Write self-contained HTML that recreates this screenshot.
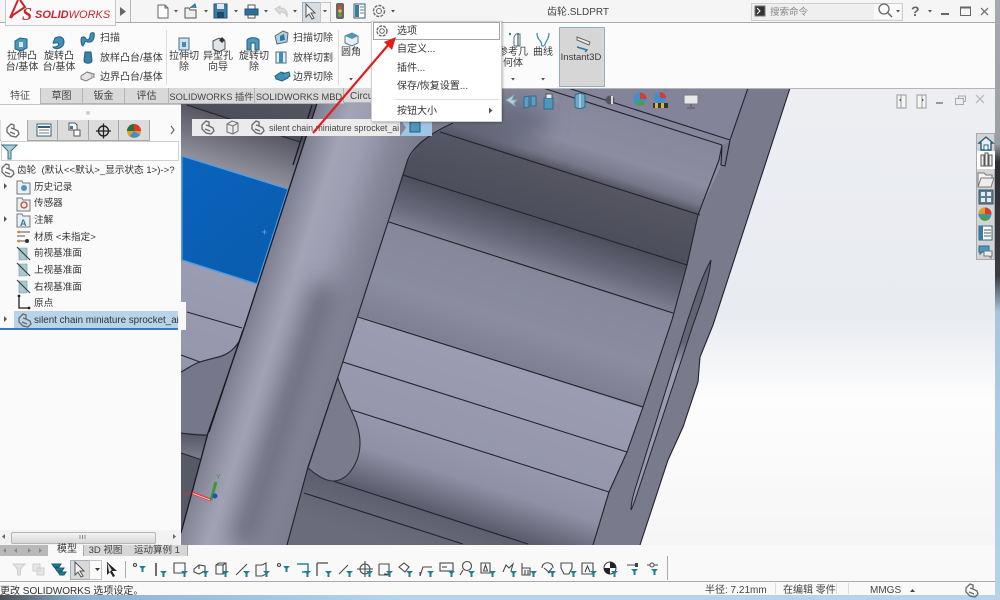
<!DOCTYPE html>
<html lang="zh"><head><meta charset="utf-8"><title>SOLIDWORKS</title>
<style>
html,body{margin:0;padding:0;background:#fff}
#r{position:relative;width:1000px;height:600px;overflow:hidden;font-family:"Liberation Sans","Noto Sans CJK SC",sans-serif;font-size:10px;color:#3a3a3a;filter:blur(.35px)}
#r div,#r>svg{position:absolute}
#r>svg{left:0;top:0}
.t{white-space:nowrap;line-height:1}
.c{transform:translateX(-50%);text-align:center;line-height:11px}
.tab{top:88px;height:15px;background:#d9d9d9;border:1px solid #b4b4b4;border-top:0;box-sizing:content-box;text-align:center;line-height:18px;font-size:9.3px;color:#444;overflow:hidden;white-space:nowrap}
.ls{font-size:9.6px;color:#333}
</style></head><body><div id="r">

<svg width="1000" height="600" viewBox="0 0 1000 600">
<defs>
<linearGradient id="bg" x1="0" y1="88" x2="0" y2="545" gradientUnits="userSpaceOnUse"><stop offset="0" stop-color="#eceef2"/><stop offset=".5" stop-color="#e8ebf0"/><stop offset=".68" stop-color="#fdfdfd"/><stop offset="1" stop-color="#f6f6f7"/></linearGradient>
<linearGradient id="teeth" gradientUnits="userSpaceOnUse" x1="0" y1="-100" x2="-151" y2="372">
<stop offset=".012" stop-color="#83849a"/><stop offset=".027" stop-color="#86879b"/><stop offset=".115" stop-color="#8c8da1"/><stop offset=".154" stop-color="#77788a"/><stop offset=".175" stop-color="#555662"/><stop offset=".279" stop-color="#4d4e5b"/><stop offset=".337" stop-color="#666778"/><stop offset=".379" stop-color="#7f8092"/><stop offset=".385" stop-color="#86879b"/><stop offset=".5" stop-color="#8b8ca0"/><stop offset=".577" stop-color="#7e7f92"/><stop offset=".583" stop-color="#9b9cb1"/><stop offset=".677" stop-color="#9899ae"/><stop offset=".763" stop-color="#9697ac"/><stop offset=".829" stop-color="#8f90a5"/><stop offset=".908" stop-color="#5c5d6d"/><stop offset=".954" stop-color="#666776"/><stop offset="1" stop-color="#6b6c7b"/></linearGradient>
<linearGradient id="band" gradientUnits="userSpaceOnUse" x1="351" y1="0" x2="454" y2="33.7"><stop offset="0" stop-color="#7d7e90"/><stop offset=".3" stop-color="#a3a4b6"/><stop offset=".52" stop-color="#9c9db0"/><stop offset=".78" stop-color="#868799"/><stop offset="1" stop-color="#7b7c8e"/></linearGradient>
<linearGradient id="slot" x1="0" y1="260" x2="0" y2="510" gradientUnits="userSpaceOnUse"><stop offset="0" stop-color="#5f6070"/><stop offset=".33" stop-color="#646575"/><stop offset=".42" stop-color="#9a9bb0"/><stop offset="1" stop-color="#9a9bb0"/></linearGradient>
<linearGradient id="dk" x1="0" y1="433" x2="0" y2="458" gradientUnits="userSpaceOnUse"><stop offset="0" stop-color="#565765"/><stop offset="1" stop-color="#7b7c8c"/></linearGradient>
<linearGradient id="tl" gradientUnits="userSpaceOnUse" x1="0" y1="45" x2="-15" y2="92"><stop offset="0" stop-color="#555662"/><stop offset="1" stop-color="#90919d"/></linearGradient>
<linearGradient id="blue" x1="182" y1="156" x2="280" y2="280" gradientUnits="userSpaceOnUse"><stop offset="0" stop-color="#0a63bb"/><stop offset="1" stop-color="#0a5cae"/></linearGradient>
<filter id="b1" x="-50%" y="-50%" width="200%" height="200%"><feGaussianBlur stdDeviation="11"/></filter>
<clipPath id="bc"><polygon points="322,88 500,88 453,123 420,142 407,162 388,222 357,318 337,380 308,467 287,545 181,545 181,533 208,433 245,325"/></clipPath>
</defs>
<rect x="181" y="88" width="819" height="457" fill="url(#bg)"/>
<polygon points="181,88 748,88 730,140 722,145 721,165 698,215 687,265 672,320 643,407 627,452 609,492 593,545 181,545" fill="url(#teeth)"/>
<polygon points="181,103 310,145 288,189 181,155" fill="url(#tl)"/>
<ellipse cx="470" cy="122" rx="80" ry="26" fill="#55566a" opacity=".6" filter="url(#b1)"/>
<polygon points="748,88 790,88 713,325 700,357 698,382 683,427 668,460 640,545 593,545 609,492 627,452 643,407 672,320 687,265 698,215 721,165 722,145 730,140" fill="#797a8c"/>
<path d="M790,88 713,325 700,357 698,382 683,427 668,460 640,545M748,88 730,140M593,545 609,492 627,452 643,407 672,320 687,265 698,215 719,160 722,145 721,165 725,166 730,140" fill="none" stroke="#22232c" stroke-width="1.1"/>
<path d="M711,260C700,280 693,305 687,322L637,483C633,495 631,503 631,510C634,504 636,497 640,485L693,325C702,300 709,280 711,260Z" fill="url(#slot)" stroke="#22232c" stroke-width="1"/>
<g stroke="#23242e" stroke-width="1.15" fill="none">
<path d="M543,88 722,145M568,88 730,140M440,132 700,215M403,175 687,265M389,222 673,313M358,317 643,407M343,362 627,452M352,410 609,492M333,481 528,544M304,493 463,544M187,105 300,142M187,312 242,328M181,355 200,362"/>
</g>
<polygon points="182,156 288,189 257,284 182,260" fill="url(#blue)" stroke="#4a9fe8" stroke-width="1.3"/>
<path d="M262,232h5M264.500,229.500v5" stroke="#5aa6ee" stroke-width=".8"/>
<polygon points="181,372 200,362 230,352 243,335 208,434 181,433" fill="#76778a"/>
<polygon points="181,433 208,435 202,460 181,453" fill="url(#dk)"/>
<polygon points="181,453 202,460 181,533" fill="#585966"/>
<path d="M243,335C238,345 232,352 222,356C212,359 205,360 200,362C193,364 187,369 181,372M181,433C190,434 200,436 208,435M181,453 202,460" fill="none" stroke="#23242e" stroke-width="1.1"/>
<polygon points="322,88 500,88 453,123 420,142 407,162 388,222 357,318 337,380 308,467 287,545 181,545 181,533 208,433 245,325" fill="url(#band)"/>
<g clip-path="url(#bc)"><path d="M325,285 240,545" stroke="#474857" stroke-width="24" opacity=".55" filter="url(#b1)" fill="none"/></g>
<path d="M338,378C346,405 360,420 360,443C360,462 348,481 333,481C325,481 315,474 308,468L337,380Z" fill="#7a7b8d" stroke="#2a2b35" stroke-width="1.1"/>
<path d="M453,123C435,131 412,145 407,162L388,222 357,318 337,380 308,467 287,545" fill="none" stroke="#23242e" stroke-width="1.15"/>
<path d="M312,105 293,165M322,88 290,186 245,325 208,433 181,533M243,330 209,432" fill="none" stroke="#191a22" stroke-width="1.3"/>
<path d="M192,493 211,500" stroke="#e33" stroke-width="3"/><path d="M193,493.500 210,500" stroke="#fbd" stroke-width="1"/>
<path d="M211,500 216,482" stroke="#3a9a3a" stroke-width="3"/><circle cx="215" cy="496" r="2.500" fill="#2548c8"/>
<text x="185" y="496" font-size="7" fill="#d33" font-family="Liberation Sans">x</text><text x="216" y="479" font-size="7" fill="#3a9a3a" font-family="Liberation Sans">Y</text>
</svg>

<!-- title + ribbon chrome -->
<div style="left:0;top:0;width:1000px;height:22px;background:#f5f5f5;border-bottom:1px solid #a9a9a9"></div>
<div style="left:0;top:23px;width:1000px;height:65px;background:#fbfbfb;border-bottom:1px solid #b5b5b5"></div>
<div style="left:5px;top:-1px;width:109px;height:25px;background:#fafafa;border:1px solid #c8c8c8"></div>
<div style="left:166px;top:30px;width:1px;height:55px;background:#ddd"></div>
<div style="left:338px;top:30px;width:1px;height:55px;background:#ddd"></div>
<div style="left:559px;top:27px;width:44px;height:58px;background:#d6d6d6;border:1px solid #8fb0bf"></div>
<div style="left:302px;top:2px;width:18px;height:19px;background:#d9dde0;border:1px solid #9cb2c0"></div>
<div style="left:320px;top:2px;width:9px;height:19px;background:#f6f6f6;border:1px solid #c4c4c4"></div>
<div style="left:751px;top:3px;width:150px;height:16px;background:#efefef;border:1px solid #cfcfcf"></div>
<div style="left:874px;top:4px;width:27px;height:15px;background:#fafafa"></div>

<!-- tabs -->
<div style="left:0;top:88px;width:40px;height:16px;background:#fbfbfb;text-align:center;line-height:18px;color:#555">特征</div>
<div class="tab" style="left:40px;width:41px;font-size:10px">草图</div>
<div class="tab" style="left:82px;width:41px;font-size:10px">钣金</div>
<div class="tab" style="left:124px;width:43px;font-size:10px">评估</div>
<div class="tab" style="left:168px;width:85px">SOLIDWORKS 插件</div>
<div class="tab" style="left:254px;width:88px">SOLIDWORKS MBD</div>
<div class="tab" style="left:343px;width:30px;text-align:left;padding-left:6px;box-sizing:border-box;font-size:10px">Circu</div>

<!-- feature tree panel -->
<div style="left:0;top:104px;width:181px;height:441px;background:#fafafa"></div>
<div style="left:0;top:104px;width:181px;height:1px;background:#c4c4c4"></div>
<div style="left:86px;top:111px;width:4px;height:4px;border-radius:50%;background:#cfcfcf"></div>
<div style="left:0;top:120px;width:150px;height:20px;background:#dcdcdc;border-bottom:1px solid #a6a6a6"></div>
<div style="left:1px;top:120px;width:26px;height:21px;background:#fafafa"></div>
<div style="left:57px;top:120px;width:1px;height:20px;background:#a8a8a8"></div>
<div style="left:88px;top:120px;width:1px;height:20px;background:#a8a8a8"></div>
<div style="left:118px;top:120px;width:1px;height:20px;background:#a8a8a8"></div>
<div style="left:149px;top:120px;width:1px;height:20px;background:#a8a8a8"></div>
<div style="left:27px;top:120px;width:1px;height:20px;background:#a8a8a8"></div>
<div style="left:1px;top:141px;width:176px;height:18px;background:#fff;border:1px solid #d0d0d0"></div>
<div style="left:14px;top:311px;width:165px;height:17px;background:#b8d4e8"></div>
<div style="left:0;top:328px;width:179px;height:2px;background:#3a78c0"></div>
<div style="left:178px;top:302px;width:8px;height:28px;background:#f8f8f8"></div>
<div style="left:0;top:530px;width:180px;height:15px;background:#f2f2f2"></div>
<div style="left:11px;top:532px;width:143px;height:10px;background:linear-gradient(#f4f4f4,#d6d6d6);border:1px solid #b5b5b5;border-radius:2px"></div>

<!-- bottom -->
<div style="left:0;top:545px;width:995px;height:50px;background:#f9f9f9"></div>
<div style="left:0;top:545px;width:48px;height:11px;background:#b9b9b9"></div>
<div style="left:83px;top:545px;width:43px;height:11px;background:#d6d6d6;border-right:1px solid #aaa;border-left:1px solid #aaa;text-align:center;line-height:12px;color:#444;font-size:9.5px">3D 视图</div>
<div style="left:127px;top:545px;width:60px;height:11px;background:#d6d6d6;border-right:1px solid #aaa;text-align:center;line-height:12px;color:#444;font-size:9.5px">运动算例 1</div>
<div class="t" style="left:57px;top:545px;font-size:10px;color:#333">模型</div>
<div style="left:0;top:581px;width:995px;height:1px;background:#aaa"></div>
<div style="left:70px;top:560px;width:18px;height:18px;background:#d9d9d9;border:1px solid #9cb2c0"></div>
<div style="left:89px;top:560px;width:11px;height:18px;background:#fafafa;border:1px solid #c4c4c4"></div>
<div style="left:125px;top:561px;width:1px;height:17px;background:#aaa"></div>
<div style="left:667px;top:556px;width:1px;height:24px;background:#aaa"></div>
<div style="left:775px;top:583px;width:1px;height:11px;background:#ddd"></div>
<div style="left:836px;top:583px;width:1px;height:11px;background:#ddd"></div>
<div style="left:848px;top:583px;width:1px;height:11px;background:#ddd"></div>
<div style="left:0;top:595px;width:1000px;height:5px;background:linear-gradient(90deg,#4a4f55 0,#8fb2d2 8%,#b7d3ec 40%,#b7d3ec 100%)"></div>
<div style="left:995px;top:0;width:5px;height:600px;background:linear-gradient(#a5a9b0 0,#9a9da4 24%,#2c2e33 27%,#3a3c42 46%,#a9c4dc 52%,#b7d3ec 100%)"></div>
<div style="left:976px;top:133px;width:19px;height:127px;background:#d4d4d4;border:1px solid #a9a9a9;box-sizing:border-box"></div>
<div style="left:977px;top:151px;width:18px;height:18px;background:#fff"></div>

<!-- breadcrumb -->
<div style="left:192px;top:119px;width:208px;height:17px;background:#ebebeb"></div>
<div style="left:400px;top:119px;width:32px;height:17px;background:#9ec5e4;clip-path:polygon(0 0,100% 0,100% 100%,0 100%,6px 50%)"></div>

<svg width="1000" height="600" viewBox="0 0 1000 600">
<defs>
<g id="P" fill="none" stroke="#6a6a6a" stroke-width="1.300"><path d="M1,5 5,1 8,2 8,6 12,8 13,11 10,14 5,13 1,9Z"/><path d="M5,5 8,6M4,9 9,11"/></g>
<g id="F"><path d="M0,0h7l-2.500,2.500v3.500h-2v-3.500z" fill="#1f7f98"/></g>
<g id="dd"><path d="M0,0h4l-2,2.500z" fill="#555"/></g>
<g id="pl" fill="#a9c9cf" stroke="#6e9aa4" stroke-width=".6"><path d="M3,2h8v12h-8z"/><path d="M1,1 14,14" stroke="#39424a" stroke-width="1.200"/></g>
</defs>
<!-- logo -->
<g fill="none" stroke="#c9252e" stroke-width="2"><path d="M18,0 10,18M20,0 25,7 13,15 11,18"/></g>
<text x="22" y="20" font-family="Liberation Serif" font-style="italic" font-weight="700" font-size="18" fill="#c9252e">S</text>
<text x="35" y="18" font-family="Liberation Sans" font-style="italic" font-size="11" fill="#c9252e"><tspan font-weight="700">SOLID</tspan><tspan>WORKS</tspan></text>
<path d="M120,7l6,4.500-6,4.500z" fill="#666"/><path d="M130.500,0v22" stroke="#bbb"/>
<!-- top toolbar -->
<path d="M158,5h7l3,3v10h-10zM165,5v3h3" fill="#fff" stroke="#666"/>
<g transform="translate(174,10)"><use href="#dd"/></g>
<path d="M185,8h4l1,2h6v8h-11z" fill="#eee" stroke="#555"/><path d="M190,8l5-4 1,4" fill="#4a93c0" stroke="#27688e"/>
<g transform="translate(204,10)"><use href="#dd"/></g>
<path d="M214,4h13v14h-13z" fill="#3a7fa8" stroke="#1e5478"/><rect x="217" y="4" width="7" height="5" fill="#dfe9ef"/><rect x="217" y="12" width="7" height="6" fill="#1f4a66"/>
<g transform="translate(234,10)"><use href="#dd"/></g>
<path d="M248,5h7v4h-7z" fill="#fff" stroke="#555"/><path d="M245,9h13v6h-13z" fill="#2b6f9a" stroke="#1e5478"/><path d="M248,15h7v3h-7z" fill="#fff" stroke="#555"/>
<g transform="translate(264,10)"><use href="#dd"/></g>
<path d="M275,9l5-3v2c5,0 8,3 7,9c-1-4-3-5-7-5v2z" fill="#d9dde0" stroke="#c4c8cc"/>
<g transform="translate(293,10)"><use href="#dd"/></g>
<path d="M306,4l0,13 3-3 3,5 2-1-3-5h4z" fill="#f4f4f4" stroke="#555"/>
<g transform="translate(323,10)"><use href="#dd"/></g>
<rect x="336" y="3" width="8" height="16" rx="2" fill="#666"/><circle cx="340" cy="7" r="1.800" fill="#e8452f"/><circle cx="340" cy="11" r="1.800" fill="#f0b73b"/><circle cx="340" cy="15" r="1.800" fill="#58a94a"/>
<rect x="354" y="4" width="11" height="14" fill="#fff" stroke="#35607c"/><rect x="355" y="5" width="4" height="12" fill="#3c7ba1"/><path d="M360,7h4M360,10h4M360,13h4" stroke="#777"/>
<circle cx="379" cy="11" r="5.500" fill="none" stroke="#6a6a6a" stroke-width="1.400" stroke-dasharray="3 1.200"/><circle cx="379" cy="11" r="2.500" fill="none" stroke="#6a6a6a"/>
<g transform="translate(391,10)"><use href="#dd"/></g>
<!-- search etc -->
<rect x="755" y="6" width="10" height="10" fill="#333" stroke="#777"/><path d="M757,8l3,3-3,3" stroke="#fff" fill="none"/>
<circle cx="884" cy="9" r="5" fill="none" stroke="#666" stroke-width="1.300"/><path d="M888,13l4,4" stroke="#666" stroke-width="1.500"/>
<g transform="translate(896,10)"><use href="#dd"/></g>
<g transform="translate(928,10)"><use href="#dd"/></g>
<rect x="941" y="13" width="8" height="2" fill="#666"/><path d="M960.500,7.500h10v8h-10z" fill="none" stroke="#666"/><path d="M960,7.500h11" stroke="#666" stroke-width="2"/>
<path d="M981,8l7,7M988,8l-7,7" stroke="#777" stroke-width="1.300"/>
<!-- ribbon icons -->
<path d="M15,41l5-3 7,1v9l-6,3-6-2z" fill="#4c97bc" stroke="#235f80"/><rect x="19" y="42" width="4" height="5" fill="#d6e8f0"/>
<path d="M55,38c6-3 9,0 9,4c0,5-7,9-11,5c4,0 7-2 5-4c-2-1-4,1-5,0z" fill="#3d8fb8" stroke="#235f80"/>
<path d="M81,40c0-4 4-4 5-1 1,2 4,0 4-3 0-3 2-4 4-3 1,4-1,9-4,9-3,1-4-2-5,0l-2,4c-2-1-2-4-2-6z" fill="#3d8fb8" stroke="#235f80"/>
<path d="M85,52h6l1,9c-1,3-7,3-8,0z" fill="#3a80a8" stroke="#235f80"/>
<path d="M81,76l6-4 5,2v4l-6,3-5-2z" fill="#e4e4e4" stroke="#7a7a7a"/><path d="M87,72l7,2 0,4" fill="#ccc" stroke="#7a7a7a"/>
<path d="M179,38h10v12h-10z" fill="#cfe1ea" stroke="#4a6e82"/><rect x="182" y="42" width="4" height="5" fill="#3d8fb8"/>
<path d="M213,41l6-3 6,3v8l-6,3-6-3z" fill="#dfe5e8" stroke="#555"/><path d="M219,40l3-3 3,3-3,3z" fill="#333"/>
<path d="M247,40c2-3 10-3 12,0v10h-4v-7h-4v7h-4z" fill="#4c97bc" stroke="#235f80"/>
<path d="M275,36l8-5 5,2-1,9-10,2z" fill="#b9cdd8" stroke="#4a6e82"/><path d="M280,36l4-2 1,6-5,1z" fill="#2c79a4"/>
<path d="M276,52h10v11h-10z" fill="#e8eef1" stroke="#4a6e82"/><rect x="279" y="52" width="4" height="11" fill="#3d8fb8"/>
<path d="M275,76l6-4 6,2 1,4-6,3-6-2z" fill="#3d8fb8" stroke="#235f80"/><path d="M282,74l7-2 1,4-3,2" fill="#4c97bc" stroke="#235f80"/>
<path d="M345,36l7-3 6,3v7l-6,3-7-3z" fill="#e8eef1" stroke="#5a7b8c"/><path d="M345,36l7 3 6-3-6-3z" fill="#4c97bc"/>
<g transform="translate(349,78)"><use href="#dd"/></g>
<path d="M509,33h2v2h-2z" fill="#2c79a4"/><path d="M516,34h4v12h-6v-9z" fill="#fff" stroke="#4a6e82"/><path d="M518,33v13" stroke="#333"/>
<path d="M537,33c0,6 3,7 4,9 1,3 0,4 2,4s2-2 3-4c1-2 3-4 3-9" fill="none" stroke="#3d8fb8" stroke-width="1.300"/>
<g transform="translate(511,78)"><use href="#dd"/></g><g transform="translate(541,78)"><use href="#dd"/></g>
<path d="M577,37l13 5-1,3-12-5z" fill="#eee" stroke="#666"/><path d="M577,47l10,3-2,2" fill="none" stroke="#2c79a4" stroke-width="1.500"/>
<!-- panel tabs -->
<use href="#P" x="6" y="123"/>
<rect x="37" y="124" width="14" height="12" fill="#fff" stroke="#35607c"/><path d="M38,127h12" stroke="#35607c" stroke-width="2"/><path d="M39,130h10M39,133h10" stroke="#777"/>
<path d="M69,123h6l2,2v5h-8z" fill="#fff" stroke="#555"/><rect x="74" y="130" width="6" height="6" fill="#fff" stroke="#555"/><rect x="70" y="126" width="3" height="3" fill="#2c79a4"/>
<circle cx="103.500" cy="131" r="5" fill="none" stroke="#222" stroke-width="1.400"/><path d="M103.500,123.500v15M96,131h15" stroke="#222" stroke-width="1.300"/>
<circle cx="134" cy="131" r="7" fill="#d8a028"/><path d="M134,131V124a7,7 0 0 1 7,7z" fill="#d93a2b"/><path d="M134,131H127a7,7 0 0 1 7-7z" fill="#2d6f3a"/><path d="M134,131l6,4a7,7 0 0 1-10,1z" fill="#3f8fd0"/>
<path d="M171,126l3,4-3,4" fill="none" stroke="#666" stroke-width="1.200"/>
<path d="M2,145h15l-6,6v8h-3v-8z" fill="#a8cdd8" stroke="#3d6e80"/>
<!-- tree -->
<use href="#P" x="1" y="163"/>
<g fill="#555"><path d="M4,183l3,3-3,3zM4,216l3,3-3,3zM4,316l3,3-3,3z"/></g>
<path d="M17,181h5l1,2h7v11h-13z" fill="#eee" stroke="#6a7c86"/><circle cx="24" cy="188" r="3" fill="#4c97bc"/>
<path d="M17,198h5l1,2h7v11h-13z" fill="#eee" stroke="#6a7c86"/><circle cx="24" cy="205" r="3" fill="none" stroke="#b84a3a" stroke-width="1.300"/>
<path d="M17,214h5l1,2h7v11h-13z" fill="#eee" stroke="#6a7c86"/><text x="20" y="226" font-size="9" font-weight="700" fill="#2c79a4">A</text>
<path d="M17,232h13M17,236h8M17,241h8" stroke="#555"/><circle cx="27" cy="241" r="2" fill="#333"/><circle cx="19" cy="232" r="1.400" fill="#d98a28"/><circle cx="19" cy="241" r="1.400" fill="#d98a28"/>
<use href="#pl" x="16" y="246"/><use href="#pl" x="16" y="262"/><use href="#pl" x="16" y="279"/>
<path d="M19,296v12h10" fill="none" stroke="#222" stroke-width="1.300"/><circle cx="19" cy="296" r="1.400" fill="#222"/><circle cx="29" cy="308" r="1.400" fill="#222"/>
<use href="#P" x="18" y="313"/>
<!-- scrollbar -->
<path d="M5,534v5l-3-2.500zM173,534v5l3-2.500z" fill="#666"/><path d="M80,535v4M82.500,535v4M85,535v4" stroke="#888"/>
<!-- breadcrumb icons -->
<use href="#P" x="201" y="120"/><path d="M227,124l5-3 6,2v8l-5,3-6-2z M227,124l6,2v8M233,126l5-3" fill="none" stroke="#777" stroke-width="1.100"/><use href="#P" x="251" y="120"/>
<rect x="410" y="122" width="10" height="10" fill="#4c97bc" stroke="#2b5a76"/>
<!-- heads up -->
<path d="M506,100l8-5-2,5 5,0-3,3 1,3z" fill="#bcd0dc" stroke="#7aa"/>
<path d="M524,97l5-1v11l-5,1zM531,96l5 0v10h-5z" fill="#5ba0c4" stroke="#2f6b8c"/>
<path d="M544,98h9v11h-9z" fill="#4c97bc" stroke="#2f6b8c"/><path d="M546,98v-4h6v4" fill="#e8eef1" stroke="#555"/><path d="M555,97h2M555,101h2" stroke="#999"/>
<path d="M575,95c3-2 8-2 10,0v12c-3,2-8,2-10,0z" fill="#6aa9c8" stroke="#2f6b8c"/><path d="M580,94v14" stroke="#dfeaf0"/>
<circle cx="610" cy="100" r="4.500" fill="#555"/><path d="M612,96v8" stroke="#ddd" stroke-width="2"/>
<circle cx="640" cy="99" r="6.500" fill="#3f8fd0"/><path d="M640,99V92.500a6.500,6.500 0 0 1 6.500,6.500z" fill="#d93a2b"/><path d="M640,99l5 4.500a6.500,6.500 0 0 1-9,1z" fill="#4aa04a"/>
<circle cx="660" cy="98" r="6" fill="#3f8fd0"/><path d="M660,98V92a6,6 0 0 1 6,6z" fill="#d93a2b"/><path d="M653,103h15v5h-15z" fill="#333"/><path d="M655,103h3v5h-3zM661,103h3v5h-3z" fill="#e0b030"/>
<rect x="684" y="95" width="14" height="9" fill="#e8e8e8" stroke="#777"/><path d="M691,104v3M687,108h8" stroke="#555"/>
<!-- window btns -->
<path d="M897,95h9v13h-9z M901,95v13" fill="#f5f5f5" stroke="#999"/><path d="M899,100l2-1.500v3z" fill="#555"/>
<path d="M917,95h9v13h-9z M922,95v13" fill="#f5f5f5" stroke="#999"/><path d="M924,100l-2-1.500v3z" fill="#555"/>
<rect x="936" y="102" width="7" height="2" fill="#999"/><path d="M955.500,98.500h8v6h-8zM958.500,98.500v-2.500h7v5.500h-2" fill="none" stroke="#aaa"/>
<path d="M976,95l8,8M984,95l-8,8" stroke="#bbb" stroke-width="1.300"/>
<!-- task pane -->
<path d="M979,143l7-6 7,6h-2v7h-10v-7z" fill="#e9eef0" stroke="#1f6080" stroke-width="1.400"/><rect x="984" y="145" width="4" height="5" fill="#fff" stroke="#1f6080"/>
<path d="M981,155h3v11h-3zM985,153h3v13h-3zM989,155h3v11h-3z" fill="#eee" stroke="#555"/>
<path d="M978,173h6l2,2h6v3h-10l-3,9h-1z" fill="#f4f4f4" stroke="#777"/><path d="M981,178h13l-3,9h-13z" fill="#ededed" stroke="#777"/>
<rect x="979" y="190" width="14" height="14" fill="#5f7e92" stroke="#3b5566"/><path d="M981,192h4v4h-4zM987,192h4v4h-4zM981,198h4v4h-4zM987,198h4v4h-4z" fill="#e4edf2"/>
<circle cx="985" cy="214" r="6.500" fill="#3f8fd0"/><path d="M985,214V207.500a6.500,6.500 0 0 1 6.500,6.500z" fill="#d93a2b"/><path d="M985,214H978.500a6.500,6.500 0 0 1 6.500-6.500z" fill="#d8a028"/><path d="M985,214l5 4.500a6.500,6.500 0 0 1-10,0z" fill="#4aa04a"/>
<rect x="979" y="226" width="13" height="14" fill="#fff" stroke="#2f6b8c"/><rect x="979" y="226" width="4" height="14" fill="#3c7ba1"/><path d="M984,230h7M984,233h7M984,236h7" stroke="#555"/>
<path d="M979,246h10v6h-7l-2,2v-2h-1z" fill="#4c97bc" stroke="#2f6b8c"/><path d="M984,251h8v5h-1v2l-2-2h-5z" fill="#eee" stroke="#777"/>
<!-- bottom nav arrows -->
<g fill="#888"><path d="M6,548v5l-3-2.500zM17,548v5l-3-2.500zM28,548v5l3-2.500zM39,548v5l3-2.500z"/></g>
<!-- bottom toolbar -->
<path d="M13,564h12l-4.500,5v6h-3v-6z" fill="#e2e2e2" stroke="#cfcfcf"/>
<path d="M33,564h7v7h-7zM37,568h7v7h-7z" fill="#e6e6e6" stroke="#cfcfcf"/>
<path d="M52,564h9l-2,3h-5zM55,568h9l-2,3h-5zM58,572h8l-2,3h-4z" fill="#1f7f98" stroke="#165a6e"/>
<path d="M75,562l0,13 3-3 3,5 2-1-3-5h4z" fill="#f6f6f6" stroke="#555"/><path d="M95,568h5l-2.500,3z" fill="#333"/>
<path d="M107,562l0,13 3-3 3,5 2-1-3-5h5z" fill="#222"/><path d="M107,562l5,8-3,3z" fill="#eee" stroke="#444" stroke-width=".6"/>
<g fill="none" stroke="#4a4a4a" stroke-width="1.100">
<circle cx="135" cy="565" r="1.500"/>
<path d="M156,563v13" stroke-width="1.600"/>
<path d="M174,563h11v10h-11z"/>
<path d="M194,569l5-4 6,1v5l-6,3-5-2zM199,565v4"/>
<path d="M216,565l3-2h7v9l-3,2h-7zM216,565h7v9M223,565l3-2"/>
<path d="M236,575l11-11" />
<path d="M256,565h6l4 -2v11l-4 2h-6z"/>
<circle cx="279" cy="565" r="1.500"/>
<path d="M297,564h11v8h-6" stroke="#2b86a4" stroke-width="1.500"/>
<path d="M317,563v13M317,563h11" stroke-width="1.300"/>
<path d="M339,574l9-9"/>
<circle cx="365" cy="569" r="5"/><path d="M357,569h16M365,561v16"/>
<path d="M379,564h10v10h-5M379,564v11h10"/>
<path d="M399,567l5-4 5,4-4,5z"/>
<path d="M420,576l3-9h9M420,576v-4"/>
<rect x="440" y="563" width="13" height="8"/><path d="M442,567h5"/>
<circle cx="467" cy="566" r="4.500"/><path d="M463,570l-3,5"/>
<path d="M481,563h9v10h-9zM485.500,565l-2,6h4z"/>
<path d="M503,572l3-7 3,3 4-4-2,7"/>
<path d="M522,563v5h8v7h-8zM525,570v5M528,570v5"/>
<path d="M542,568c0-7 11-7 11,0M544,568l6 5M552,568l-4 5"/>
<path d="M561,563h11v5l-3,6h-5l-3-6z"/>
<path d="M582,563h11v11h-11zM585,572l2.500-6 2.500,6"/>
<path d="M627,565h10M647,565h11"/>
</g>
<circle cx="610" cy="568" r="6" fill="#fff" stroke="#333"/><path d="M610,568V562a6,6 0 0 1 6,6zM610,568H604a6,6 0 0 0 6,6z" fill="#222"/>
<rect x="635" y="563" width="3" height="4" fill="#444"/><circle cx="652" cy="565" r="2" fill="#fff" stroke="#444"/>
<g>
<use href="#F" x="139" y="566"/><use href="#F" x="160" y="571"/><use href="#F" x="181" y="571"/><use href="#F" x="202" y="571"/><use href="#F" x="222" y="571"/><use href="#F" x="243" y="571"/><use href="#F" x="263" y="571"/><use href="#F" x="283" y="566"/><use href="#F" x="304" y="571"/><use href="#F" x="325" y="571"/><use href="#F" x="346" y="571"/><use href="#F" x="366" y="571"/><use href="#F" x="386" y="571"/><use href="#F" x="406" y="571"/><use href="#F" x="427" y="571"/><use href="#F" x="448" y="571"/><use href="#F" x="468" y="571"/><use href="#F" x="489" y="571"/><use href="#F" x="510" y="571"/><use href="#F" x="530" y="571"/><use href="#F" x="549" y="571"/><use href="#F" x="570" y="571"/><use href="#F" x="590" y="571"/><use href="#F" x="611" y="571"/><use href="#F" x="631" y="569"/><use href="#F" x="651" y="569"/>
</g>
<path d="M910,592l2.500-3 2.500,3z" fill="#444"/>
<use href="#P" x="965" y="583"/>
</svg>

<!-- text -->
<div class="t" style="left:578px;top:8px;font-size:10px;color:#444;transform:translateX(-50%)">齿轮.SLDPRT</div>
<div class="t" style="left:770px;top:8px;color:#888;font-size:9.500px">搜索命令</div>
<div class="t" style="left:911px;top:4px;font-size:14px;font-weight:700;color:#666">?</div>
<div class="t c" style="left:22px;top:51px">拉伸凸<br>台/基体</div>
<div class="t c" style="left:59px;top:51px">旋转凸<br>台/基体</div>
<div class="t" style="left:100px;top:34px">扫描</div>
<div class="t" style="left:100px;top:54px">放样凸台/基体</div>
<div class="t" style="left:100px;top:73px">边界凸台/基体</div>
<div class="t c" style="left:184px;top:51px">拉伸切<br>除</div>
<div class="t c" style="left:218px;top:51px">异型孔<br>向导</div>
<div class="t c" style="left:254px;top:51px">旋转切<br>除</div>
<div class="t" style="left:293px;top:34px">扫描切除</div>
<div class="t" style="left:293px;top:54px">放样切割</div>
<div class="t" style="left:293px;top:73px">边界切除</div>
<div class="t c" style="left:351px;top:47px">圆角</div>
<div class="t c" style="left:513px;top:47px">参考几<br>何体</div>
<div class="t c" style="left:543px;top:47px">曲线</div>
<div class="t c" style="left:581px;top:52px;font-size:9.500px">Instant3D</div>
<div class="t" style="left:269px;top:124px;font-size:8.800px;color:#444">silent chain miniature sprocket_ai</div>

<div class="t ls" style="left:17px;top:166px">齿轮&nbsp; (默认&lt;&lt;默认&gt;_显示状态 1&gt;)-&gt;?</div>
<div class="t ls" style="left:34px;top:183px">历史记录</div>
<div class="t ls" style="left:34px;top:199px">传感器</div>
<div class="t ls" style="left:34px;top:216px">注解</div>
<div class="t ls" style="left:34px;top:233px">材质 &lt;未指定&gt;</div>
<div class="t ls" style="left:34px;top:249px">前视基准面</div>
<div class="t ls" style="left:34px;top:266px">上视基准面</div>
<div class="t ls" style="left:34px;top:283px">右视基准面</div>
<div class="t ls" style="left:34px;top:299px">原点</div>
<div class="t ls" style="left:34px;top:316px;width:145px;overflow:hidden;font-size:9.800px">silent chain miniature sprocket_ai</div>

<div class="t" style="left:0;top:587px;font-size:10px;color:#333">更改 SOLIDWORKS 选项设定。</div>
<div class="t" style="left:705px;top:586px;color:#444">半径: 7.21mm</div>
<div class="t" style="left:783px;top:586px;color:#444">在编辑 零件</div>
<div class="t" style="left:870px;top:586px;color:#444">MMGS</div>

<!-- dropdown -->
<div style="left:371px;top:21px;width:131px;height:101px;background:#fff;border:1px solid #cfcfcf;box-sizing:border-box;box-shadow:1px 1px 2px rgba(0,0,0,.25)"></div>
<div style="left:373px;top:22px;width:127px;height:18px;background:#fff;border:1px solid #a5a5a5;box-sizing:border-box"></div>
<div style="left:395px;top:99px;width:104px;height:1px;background:#ddd"></div>
<div class="t" style="left:397px;top:27px;color:#333">选项</div>
<div class="t" style="left:397px;top:45px;color:#333">自定义...</div>
<div class="t" style="left:397px;top:64px;color:#333">插件...</div>
<div class="t" style="left:397px;top:82px;color:#333">保存/恢复设置...</div>
<div class="t" style="left:397px;top:107px;color:#333">按钮大小</div>
<svg width="1000" height="600" viewBox="0 0 1000 600">
<circle cx="382" cy="31" r="5" fill="none" stroke="#666" stroke-width="1.400" stroke-dasharray="3 1.100"/><circle cx="382" cy="31" r="2.300" fill="none" stroke="#666"/>
<path d="M489,107.500l3.500,3-3.500,3z" fill="#555"/>
<path d="M313,133 389,44" stroke="#e01c1c" stroke-width="2.200"/>
<polygon points="396,37 384,42 392,50" fill="#e01c1c"/>
</svg>
</div></body></html>
